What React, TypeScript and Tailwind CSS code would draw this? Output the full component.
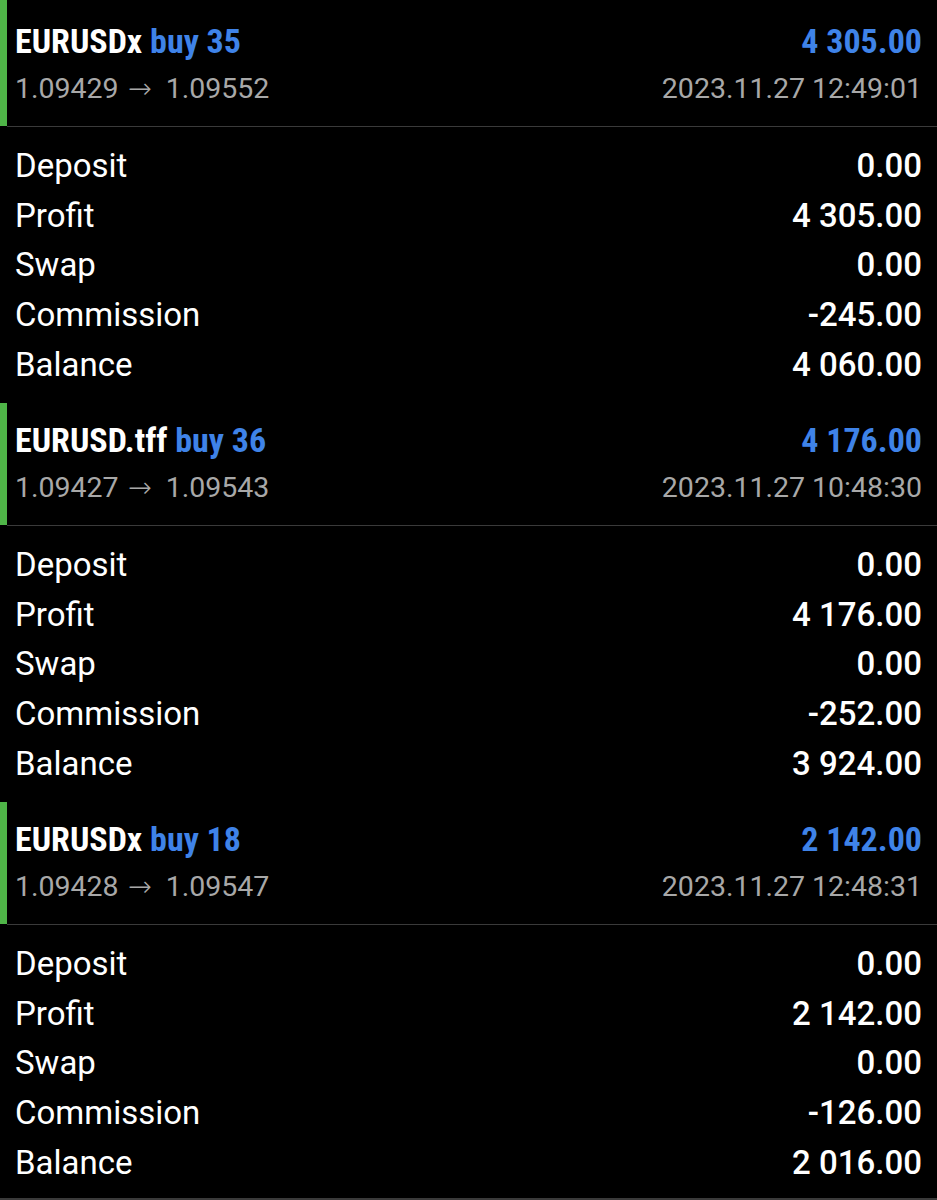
const trades = [
  {
    symbol: "EURUSDx",
    side: "buy 35",
    total: "4 305.00",
    from: "1.09429",
    to: "1.09552",
    time: "2023.11.27 12:49:01",
    rows: [
      ["Deposit", "0.00"],
      ["Profit", "4 305.00"],
      ["Swap", "0.00"],
      ["Commission", "-245.00"],
      ["Balance", "4 060.00"],
    ],
  },
  {
    symbol: "EURUSD.tff",
    side: "buy 36",
    total: "4 176.00",
    from: "1.09427",
    to: "1.09543",
    time: "2023.11.27 10:48:30",
    rows: [
      ["Deposit", "0.00"],
      ["Profit", "4 176.00"],
      ["Swap", "0.00"],
      ["Commission", "-252.00"],
      ["Balance", "3 924.00"],
    ],
  },
  {
    symbol: "EURUSDx",
    side: "buy 18",
    total: "2 142.00",
    from: "1.09428",
    to: "1.09547",
    time: "2023.11.27 12:48:31",
    rows: [
      ["Deposit", "0.00"],
      ["Profit", "2 142.00"],
      ["Swap", "0.00"],
      ["Commission", "-126.00"],
      ["Balance", "2 016.00"],
    ],
  },
];

const titleFont =
  "font-['Roboto_Condensed','DejaVu_Sans_Condensed','Liberation_Sans_Narrow',Roboto,sans-serif] [font-stretch:condensed]";

function TradeBlock({ trade, first }: { trade: (typeof trades)[number]; first: boolean }) {
  return (
    <div>
      {/* header with green marker */}
      <div
        className={`flex border-l-[7px] border-[#4fb548] pr-[15px] pl-[8px] ${first ? "h-[126px] pt-[21px]" : "h-[122px] pt-[17px]"}`}
      >
        <div className="flex w-full flex-col">
          <div className={`flex h-[40px] items-center justify-between text-[34px] leading-[40px] font-bold ${titleFont}`}>
            <p>
              <span className="text-white">{trade.symbol}</span>{" "}
              <span className="text-[#3f83e8]">{trade.side}</span>
            </p>
            <p className="text-[#3f83e8]">{trade.total}</p>
          </div>
          <div className="mt-[10px] flex h-[36px] items-center justify-between text-[28.5px] leading-[36px] text-[#a8a8a8]">
            <p>
              {trade.from}{" "}
              <span className="mr-[7px] ml-[2px] font-['DejaVu_Sans',sans-serif] font-extralight">→</span>{" "}
              {trade.to}
            </p>
            <p>{trade.time}</p>
          </div>
        </div>
      </div>
      <div className="ml-[7px] h-px bg-[#3a3a3a]" />
      {/* details */}
      <div className="py-[14px] pr-[15px] pl-[15px]">
        {trade.rows.map(([label, value]) => (
          <div key={label} className="flex h-[49.6px] items-center justify-between text-[33px] leading-none text-white">
            <span>{label}</span>
            <span className="font-medium">{value}</span>
          </div>
        ))}
      </div>
    </div>
  );
}

export default function App() {
  return (
    <div className="relative h-[1200px] w-[937px] overflow-hidden bg-black font-['Roboto',sans-serif]">
      {trades.map((t, i) => (
        <TradeBlock key={i} trade={t} first={i === 0} />
      ))}
      <div className="absolute right-0 bottom-0 left-0 h-[2px] bg-[#3a3a3a]" />
    </div>
  );
}
